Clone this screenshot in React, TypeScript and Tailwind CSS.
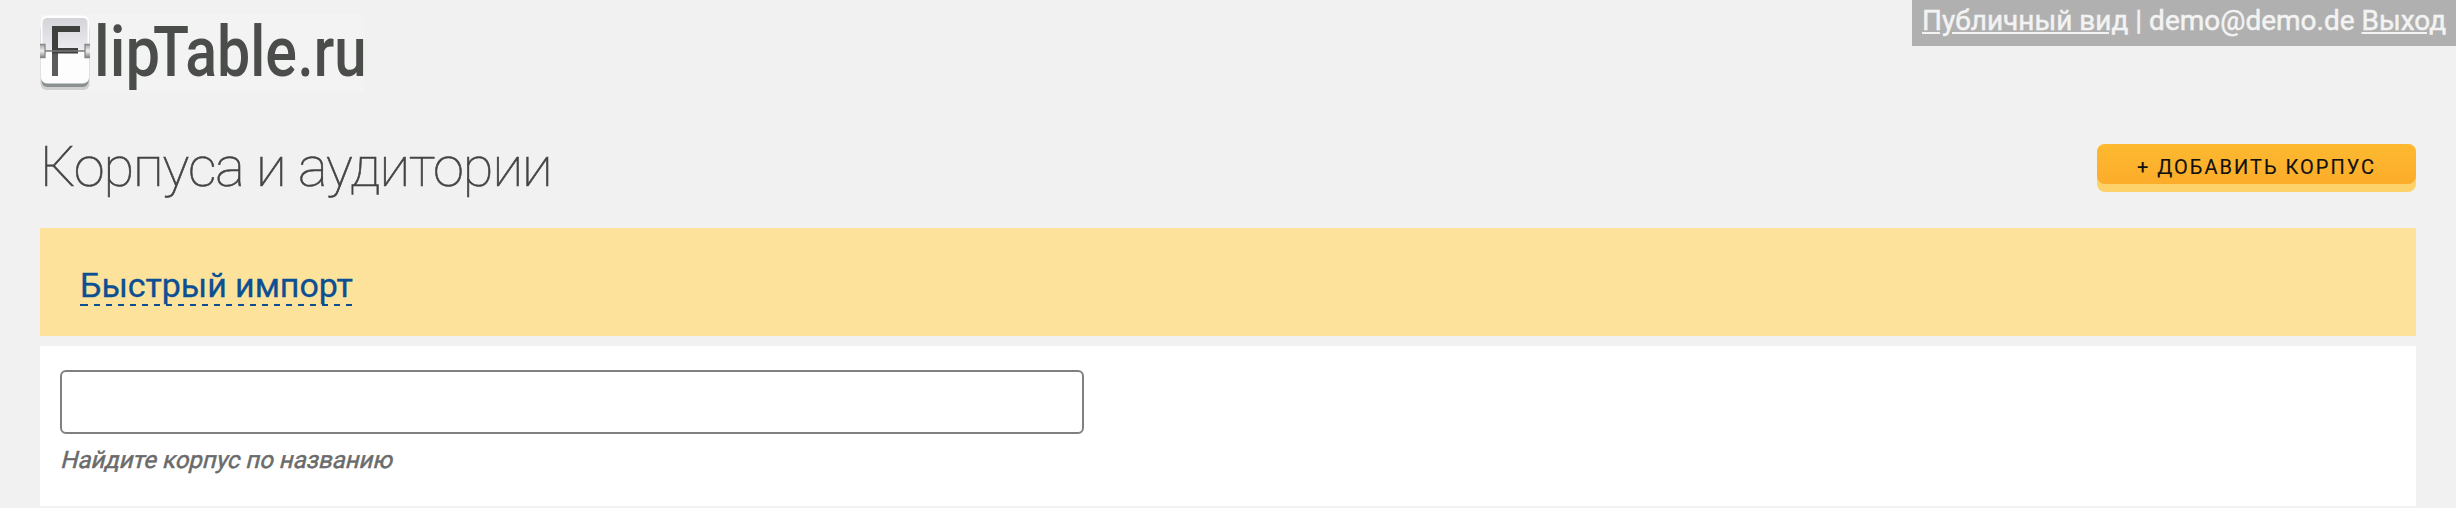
function Logo() {
  return (
    <svg className="block h-[92px] w-[340px]" viewBox="0 0 340 92" role="img" aria-label="FlipTable.ru">
      <defs>
        <linearGradient id="flap" x1="0" y1="0" x2="0" y2="1">
          <stop offset="0" stopColor="#d4d4d8" />
          <stop offset="1" stopColor="#ececf1" />
        </linearGradient>
        <linearGradient id="hinge" x1="0" y1="0" x2="0" y2="1">
          <stop offset="0" stopColor="#a9a9a9" />
          <stop offset="0.5" stopColor="#f0f0f0" />
          <stop offset="1" stopColor="#8c8c8c" />
        </linearGradient>
        <filter id="soft" x="-5%" y="-5%" width="110%" height="110%">
          <feGaussianBlur stdDeviation="0.7" />
        </filter>
      </defs>
      <rect x="0" y="14" width="324" height="77" fill="#f3f3f3" />
      <g filter="url(#soft)">
        <rect x="0.5" y="24" width="49" height="66" rx="6" fill="#cfcfcf" />
        <rect x="1.5" y="20" width="47" height="67" rx="6" fill="#8b9090" />
        <rect x="1" y="15.500" width="48" height="68" rx="6" fill="#fdfdfd" />
        <path d="M2.500 51V23q0-5 5-5h35q5 0 5 5v28z" fill="url(#flap)" />
        <path d="M12 26h6v50h-6z" fill="#5a5b5a" />
        <path d="M12 26h28v6H18v16h20v5.500H12z" fill="#3d3f3e" />
        <path d="M5 51h40" stroke="#777" strokeWidth="1.600" />
        <rect x="0" y="45" width="5" height="12" fill="url(#hinge)" />
        <rect x="45" y="45" width="5" height="12" fill="url(#hinge)" />
        <path d="M0 44.500h5v13H0M50 44.500h-5v13h5" fill="none" stroke="#888" strokeWidth="1.300" />
        <text y="76" fontFamily="Roboto, sans-serif" fontSize="70" fontWeight="500" fill="#4b4d4c">
          <tspan x="54" textLength="66" lengthAdjust="spacingAndGlyphs">lip</tspan>
          <tspan x="113" textLength="144" lengthAdjust="spacingAndGlyphs">Table</tspan>
          <tspan x="257.500" textLength="69" lengthAdjust="spacingAndGlyphs">.ru</tspan>
        </text>
      </g>
    </svg>
  );
}

function AccountBar() {
  return (
    <div className="h-[46px] w-[544px] bg-[#b0b0b0] pl-[10px] pt-[4px] text-[28px] leading-[33px] whitespace-nowrap text-[#f3f3f3] [-webkit-text-stroke:0.5px_#f3f3f3]">
      <a href="#public" className="underline">Публичный вид</a>
      {" | demo@demo.de "}
      <a href="#logout" className="underline">Выход</a>
    </div>
  );
}

export default function App() {
  return (
    <div className="h-[508px] overflow-hidden bg-[#f1f1f1] font-['Roboto',sans-serif]">
      <header className="flex h-[92px] items-start justify-between pl-10">
        <Logo />
        <AccountBar />
      </header>

      <main className="px-10">
        <div className="flex h-[136px] items-start justify-between">
          <h1 className="pt-[42px] text-[56px] leading-[66px] font-thin tracking-[-1.08px] whitespace-nowrap text-[#444] [-webkit-text-stroke:0.6px_#444]">Корпуса и аудитории</h1>
          <button className="mt-[52px] h-[48px] w-[319px] rounded-lg bg-[#fdd26b] pb-2">
            <span className="flex h-[40px] items-center justify-center rounded-lg bg-linear-to-b from-[#fdb930] to-[#fcac2a] pt-[5px] text-[20px] tracking-[2px] whitespace-nowrap text-[#111] [-webkit-text-stroke:0.15px_#111]">
              + ДОБАВИТЬ КОРПУС
            </span>
          </button>
        </div>

        <section className="h-[108px] bg-[#fde29b] px-10 pt-[37px]">
          <a href="#import" className="block w-[273px] text-[34px] leading-[40px] tracking-[-0.05px] whitespace-nowrap text-[#0c4f93] [-webkit-text-stroke:0.3px_#0c4f93]">
            <span className="block h-[39px]">Быстрый импорт</span>
            <span className="flex h-0.5">
              <span className="w-0.5 bg-[#0c4f93]" />
              <span className="flex-1 bg-[repeating-linear-gradient(90deg,#0c4f93_0_6px,transparent_6px_12px)]" />
            </span>
          </a>
        </section>

        <section className="mt-[10px] h-[160px] bg-white px-5 pt-6">
          <input aria-label="Корпус" className="block h-[64px] w-[1024px] rounded-md border-2 border-[#808080] bg-white px-3 text-[28px] outline-none" />
          <p className="mt-[10px] ml-[1.5px] w-fit -skew-x-[14deg] text-[24px] leading-[32px] text-[#6b6b6b] [-webkit-text-stroke:0.5px_#6b6b6b]">Найдите корпус по названию</p>
        </section>
      </main>
    </div>
  );
}
